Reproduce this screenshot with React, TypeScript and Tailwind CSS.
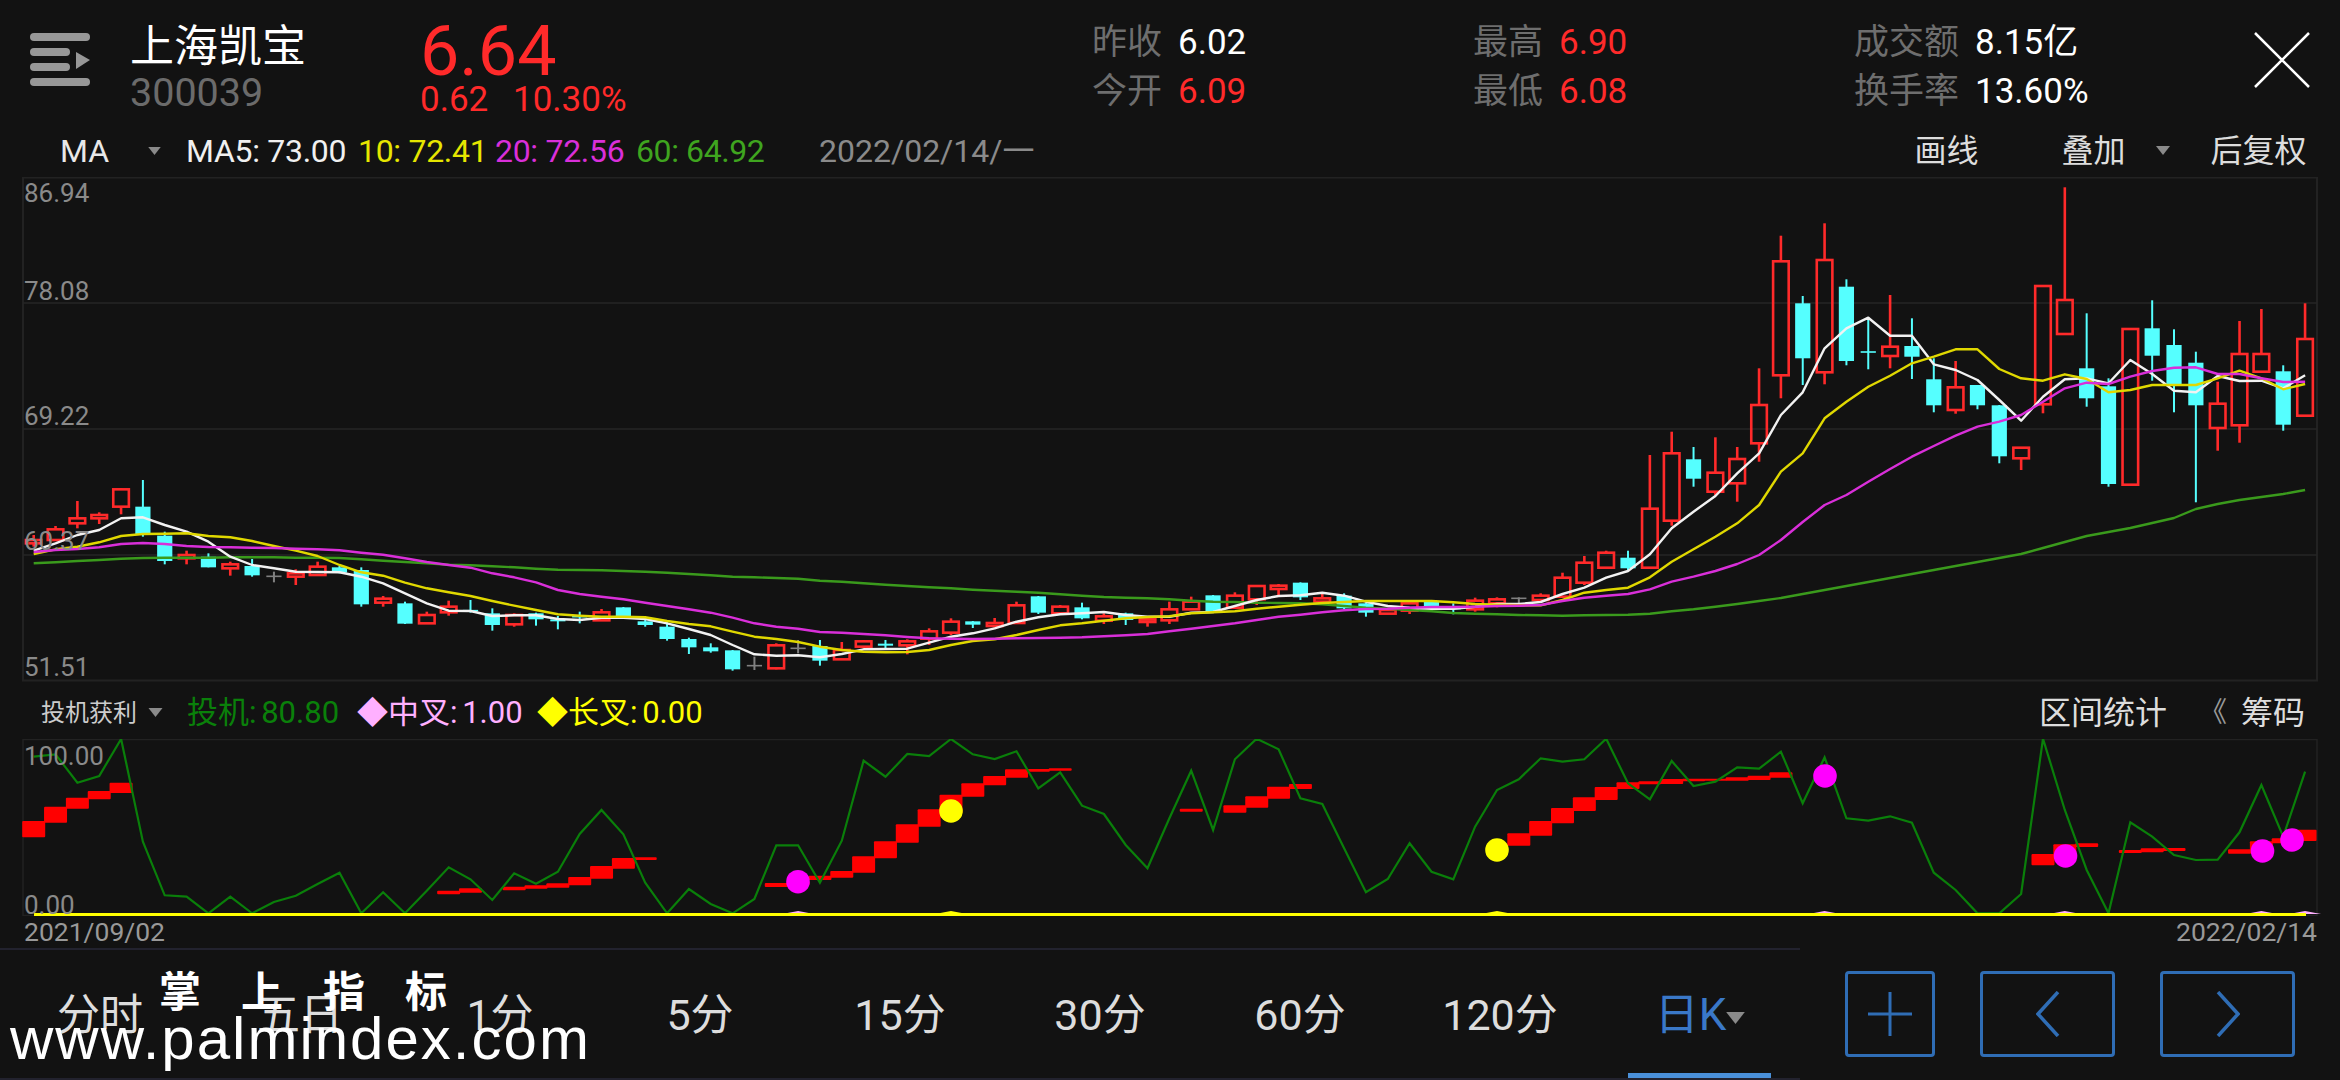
import React from 'react'

// x of the i-th trading day, in page pixels
const dayX = (i: number) => 33.7 + 21.84 * i

const y8 = (z: number) => 460 + z / 3
const y9 = (z: number) => 500 + z / 3
const same = (z: number) => z

type Raw = [number, number, number, number, string]

const raw8: Raw[] = [
  [225, 260, 240, 250, 'r'], [198, 240, 208, 240, 'r'], [123, 205, 175, 190, 'r'], [157, 192, 165, 175, 'r'],
  [85, 163, 88, 140, 'r'], [60, 230, 140, 225, 'c'], [215, 313, 227, 303, 'c'], [272, 313, 285, 295, 'r'],
  [280, 322, 290, 322, 'c'], [305, 347, 313, 325, 'r'], [297, 350, 318, 346, 'c'], [335, 367, 349, 349, 'g'],
  [328, 375, 340, 350, 'r'], [305, 345, 320, 345, 'r'], [318, 340, 322, 338, 'c'], [322, 440, 330, 433, 'c'],
  [408, 440, 416, 428, 'r'], [425, 492, 430, 491, 'c'], [455, 490, 465, 490, 'r'], [422, 467, 440, 457, 'r'],
  [420, 458, 452, 454, 'c'], [445, 512, 460, 495, 'c'], [460, 500, 465, 493, 'r'], [458, 497, 460, 478, 'c'],
  [468, 508, 478, 484, 'c'], [455, 490, 470, 472, 'c'], [447, 482, 457, 481, 'r'], [441, 472, 442, 470, 'c'],
  [475, 500, 484, 495, 'c'], [480, 542, 500, 537, 'c'], [533, 582, 537, 562, 'c'], [550, 578, 562, 574, 'c'],
  [570, 632, 571, 628, 'c'], [590, 630, 617, 617, 'g'], [550, 628, 556, 625, 'r'], [540, 580, 565, 565, 'g'],
]

const raw9: Raw[] = [
  [420, 497, 438, 482, 'c'], [426, 480, 450, 478, 'r'], [420, 445, 424, 440, 'r'], [420, 447, 431, 437, 'c'],
  [418, 463, 424, 436, 'r'], [385, 435, 394, 416, 'r'], [355, 405, 365, 398, 'r'], [363, 384, 364, 374, 'c'],
  [354, 383, 369, 378, 'r'], [305, 372, 316, 369, 'r'], [288, 342, 289, 338, 'c'], [315, 342, 320, 340, 'r'],
  [308, 358, 322, 355, 'c'], [340, 372, 349, 362, 'r'], [338, 375, 340, 360, 'c'], [350, 380, 358, 366, 'r'],
  [305, 372, 328, 361, 'r'], [290, 330, 305, 328, 'r'], [285, 334, 286, 333, 'c'], [277, 326, 287, 323, 'r'],
  [257, 315, 258, 298, 'r'], [252, 287, 257, 267, 'r'], [247, 300, 248, 292, 'c'], [280, 315, 295, 305, 'r'],
  [280, 327, 287, 325, 'c'], [308, 350, 310, 338, 'c'], [325, 342, 330, 341, 'r'], [305, 342, 310, 332, 'r'],
  [305, 332, 306, 325, 'c'], [310, 343, 320, 328, 'c'], [293, 335, 302, 328, 'r'], [292, 322, 298, 310, 'r'],
  [292, 320, 295, 295, 'g'], [280, 305, 287, 300, 'r'],
]

const rawAbs: Raw[] = [
  [572.7, 596.7, 577.7, 596.7, 'r'], [556, 585, 562.7, 582.7, 'r'], [550.7, 569, 552.7, 567.7, 'r'], [550.7, 570, 557.7, 568.3, 'c'],
  [455, 568, 508.7, 567.7, 'r'], [431.7, 525.7, 453.3, 520.7, 'r'], [447, 486.7, 459.3, 478.7, 'c'], [437.3, 495, 472.7, 491.7, 'r'],
  [447, 501.7, 459, 483.3, 'r'], [368.3, 461.7, 405, 443.3, 'r'], [235.7, 398.3, 261.3, 375.3, 'r'], [296, 385, 303.3, 358.3, 'c'],
  [223.3, 384.3, 260, 372.3, 'r'], [279.3, 365.3, 286.7, 361, 'c'], [317.7, 369.3, 352, 352, 'c'], [295, 368.3, 346.7, 356, 'r'],
  [318.3, 379, 346, 356.7, 'c'], [358.3, 412.3, 379.3, 405.3, 'c'], [361, 413.7, 387.3, 410, 'r'], [385, 409.3, 385, 405.3, 'c'],
  [405, 463.3, 405.3, 456.3, 'c'], [447, 470, 447.7, 458.3, 'r'], [286, 413.3, 286, 404.3, 'r'], [187.3, 334, 300, 334, 'r'],
  [313.3, 406.7, 368.3, 398.3, 'c'], [378.3, 486.7, 386.3, 484, 'c'], [329, 485, 329, 484.7, 'r'], [300.3, 380.7, 328.3, 355.7, 'c'],
  [329.3, 412.3, 345, 385, 'c'], [351.7, 502.3, 362.7, 405.3, 'c'], [381.7, 450.7, 403.7, 428, 'r'], [321, 442.7, 354, 425.3, 'r'],
  [309, 371.7, 354, 371.7, 'r'], [365.3, 430.7, 371.3, 424.7, 'c'], [303.3, 416, 339, 415.7, 'r'],
]

const toPx = (rows: Raw[], f: (z: number) => number) =>
  rows.map(([hi, lo, top, bot, kind]) => ({ hi: f(hi), lo: f(lo), top: f(top), bot: f(bot), kind }))

const candles = [...toPx(raw8, y8), ...toPx(raw9, y9), ...toPx(rawAbs, same)]

const ma5 = [
  ...[272, 250, 225, 210, 175, 172, 195, 215, 245, 290, 315, 325, 335, 336, 337, 350, 370, 400, 430, 452, 453, 468, 466, 466, 477, 480, 473, 473, 477, 490, 507, 525, 555, 583, 587, 586].map(y8),
  ...[472, 462, 448, 447, 446, 428, 410, 400, 385, 365, 352, 343, 340, 336, 345, 350, 350, 338, 336, 318, 300, 288, 286, 278, 287, 305, 318, 323, 326, 326, 320, 312, 312, 306].map(y9),
  594, 587.7, 577.7, 571, 554.3, 528.3, 511.7, 496, 473.3, 453.3, 415, 392.3, 348.3, 328.3, 317.7, 335.7, 335.7, 364.3, 370, 380, 400, 420.7, 396.7, 379.3, 378.3, 383.3, 360, 374, 390.7, 392.3, 376, 381, 380.7, 388.3, 375.3,
]
const ma10 = [
  ...[282, 268, 260, 247, 228, 222, 221, 220, 228, 232, 243, 258, 272, 288, 315, 337, 347, 368, 385, 397, 408, 423, 437, 450, 463, 467, 470, 470, 472, 483, 492, 499, 515, 530, 537, 546].map(y8),
  ...[440, 450, 455, 457, 456, 450, 435, 423, 418, 405, 390, 376, 370, 362, 355, 351, 349, 340, 337, 334, 326, 320, 314, 309, 306, 303, 303, 303, 303, 307, 312, 314, 316, 316].map(y9),
  600, 592.7, 590, 587.7, 577.3, 561.7, 549.3, 536.7, 523.3, 505, 471.7, 453.3, 418.3, 401.7, 386.7, 375.7, 363.3, 356.7, 349.3, 349.3, 369, 378.3, 380.7, 374.3, 379, 392.3, 390, 385, 385, 385, 378.3, 370.7, 378.3, 389.3, 384,
]
const ma20 = [
  ...[276, 270, 267, 262, 252, 249, 252, 258, 261, 262, 263, 264, 266, 268, 271, 278, 284, 295, 306, 315, 323, 340, 352, 367, 390, 402, 410, 418, 428, 438, 448, 458, 473, 490, 500, 506].map(y8),
  ...[396, 398, 402, 406, 411, 415, 416, 417, 416, 415, 414, 413, 412, 409, 406, 402, 394, 386, 378, 370, 360, 350, 344, 337, 331, 327, 326, 323, 321, 321, 320, 318, 317, 315].map(y9),
  601, 597.7, 595.7, 594, 589.3, 581.7, 576.7, 571, 564, 555, 540, 522, 505, 495, 481.7, 469, 456.7, 446, 435.7, 426.7, 421.7, 415, 401.7, 388.3, 382.7, 384, 376.7, 371, 367.7, 367.3, 374, 374, 378.3, 382, 381.7,
]
const ma60 = [
  ...[310, 307, 303, 300, 296, 294, 293, 293, 293, 292, 292, 292, 293, 293, 294, 298, 302, 306, 310, 314, 316, 319, 322, 326, 329, 330, 331, 333, 335, 338, 342, 346, 350, 352, 354, 356].map(y8),
  ...[242, 245, 250, 254, 258, 262, 265, 269, 272, 275, 278, 283, 287, 291, 293, 295, 298, 302, 305, 306, 308, 309, 310, 313, 318, 323, 326, 330, 334, 339, 341, 343, 345, 346].map(y9),
  615.7, 615.3, 615, 614.7, 613.7, 611.3, 609.3, 606.7, 604, 601, 598, 594, 590, 586, 582, 578, 574, 570, 566, 562, 558, 554, 548, 542, 536, 532, 528, 523, 518, 509, 504, 500, 497, 494, 490,
]

const y700 = (z: number) => 700 + z / 3
const y680 = (z: number) => 680 + z / 3

const speculate = [
  ...[170, 163, 248, 228, 117, 425, 586, 590, 640, 590, 640, 606, 587, 552, 518, 640, 577, 640, 572, 502, 538, 600, 520, 551, 515, 402].map(y700),
  ...[330, 403, 548, 640, 567, 612, 640, 597, 436, 436, 548, 422, 182, 230, 162, 168, 117, 163, 177, 154, 265, 217, 317, 342, 435, 505, 355, 212].map(y700),
  ...[450, 238, 176, 208, 355, 372, 505, 637, 597, 490, 575, 598, 440, 330, 298, 235, 245, 238, 176, 310, 358, 243, 318, 305, 262, 266, 215, 370, 232, 415, 422, 409, 428, 578, 630, 700, 700, 642, 176, 390, 570, 700, 427, 470, 525, 540, 539, 457, 315, 470, 275].map(y680),
]

// red step band: [day, top, bottom]
const bands: [number, number, number][] = [
  ...([
    [0, 363, 412], [1, 320, 368], [2, 293, 326], [3, 273, 298], [4, 248, 279],
    [19, 572, 583], [20, 565, 578], [22, 560, 571], [23, 556, 566], [24, 550, 563], [25, 531, 556], [26, 498, 536],
    [27, 474, 506], [28, 472, 480], [34, 549, 561], [35, 545, 555], [36, 527, 540], [37, 513, 533], [38, 469, 518],
    [39, 424, 475], [40, 373, 428], [41, 328, 380], [42, 284, 340], [43, 250, 290], [44, 228, 256], [45, 208, 233],
    [46, 207, 215], [47, 205, 212],
  ] as [number, number, number][]).map(([d, t, b]): [number, number, number] => [d, y700(t), y700(b)]),
  ...([
    [53, 386, 395], [55, 376, 398], [56, 349, 383], [57, 320, 356], [58, 312, 327],
    [68, 460, 497], [69, 423, 467], [70, 384, 430], [71, 352, 393], [72, 321, 360], [73, 307, 327], [74, 304, 313],
    [75, 297, 312], [76, 296, 304], [77, 296, 302], [78, 292, 302], [79, 287, 300], [80, 277, 293],
    [92, 522, 556], [93, 493, 535], [94, 490, 501], [96, 510, 519], [97, 505, 517], [98, 504, 513],
    [101, 508, 521], [102, 484, 520], [103, 475, 490], [104, 449, 483],
  ] as [number, number, number][]).map(([d, t, b]): [number, number, number] => [d, y680(t), y680(b)]),
]

const dots = [
  { x: 798, y: 881.7, c: '#ff00ff' },
  { x: 951, y: 811, c: '#ffff00' },
  { x: 1497, y: 850, c: '#ffff00' },
  { x: 1825, y: 776, c: '#ff00ff' },
  { x: 2065.5, y: 856, c: '#ff00ff' },
  { x: 2262.5, y: 851, c: '#ff00ff' },
  { x: 2292, y: 840, c: '#ff00ff' },
]

const line = (ys: number[]) => ys.map((y, i) => `${dayX(i).toFixed(1)},${y.toFixed(1)}`).join(' ')

function KChart() {
  return (
    <svg viewBox="0 177 2340 505" className="block w-[2340px] h-[505px]">
      <rect x="23" y="177.5" width="2294" height="503" fill="none" stroke="#222222" strokeWidth="2" />
      {[303, 429, 555].map(y => (
        <line key={y} x1="23" x2="2317" y1={y} y2={y} stroke="#262626" strokeWidth="1.5" />
      ))}
      {candles.map((c, i) => {
        const x = dayX(i)
        if (c.kind === 'r') {
          return (
            <g key={i} stroke="#ff2a2a" strokeWidth="2.6" fill="none">
              <line x1={x} x2={x} y1={c.hi} y2={c.top} />
              <line x1={x} x2={x} y1={c.bot} y2={c.lo} />
              <rect x={x - 7.8} y={c.top} width="15.6" height={Math.max(c.bot - c.top, 1)} />
            </g>
          )
        }
        const color = c.kind === 'c' ? '#55ffff' : '#808080'
        return (
          <g key={i}>
            <line x1={x} x2={x} y1={c.hi} y2={c.lo} stroke={color} strokeWidth="2" />
            <rect x={x - 7.6} y={c.top - (c.bot - c.top < 1 ? 0.8 : 0)} width="15.2" height={Math.max(c.bot - c.top, 1.6)} fill={color} />
          </g>
        )
      })}
      <g fill="none" strokeWidth="2.4" strokeLinejoin="round">
        <polyline points={line(ma60)} stroke="#3a9a1c" />
        <polyline points={line(ma5)} stroke="#f2f2f2" />
        <polyline points={line(ma10)} stroke="#e0d800" />
        <polyline points={line(ma20)} stroke="#d92fd9" />
      </g>
    </svg>
  )
}

function Oscillator() {
  return (
    <svg viewBox="0 739 2340 177" className="block w-[2340px] h-[177px]">
      <rect x="23" y="739.5" width="2294" height="176" fill="none" stroke="#222222" strokeWidth="1.5" />
      {bands.map(([d, t, b]) => (
        <rect key={d} x={Math.max(dayX(d) - 11.5, 22)} y={t} width={dayX(d) + 11.5 > 2318 ? 2318 - dayX(d) + 11.5 : 23} height={b - t} rx="1" fill="#ff0000" />
      ))}
      <polyline points={line(speculate)} fill="none" stroke="#0a7f0a" strokeWidth="2.2" />
      {[35, 42, 67, 82, 93, 102, 104].map(d => (
        <polygon key={d} points={`${dayX(d) - 16},914 ${dayX(d)},911 ${dayX(d) + 16},914`} fill={d === 42 || d === 67 ? '#ffff00' : '#ffb0ff'} />
      ))}
      <line x1="34" x2="2306" y1="914.5" y2="914.5" stroke="#ffff00" strokeWidth="3" />
      {dots.map(d => (
        <ellipse key={d.x} cx={d.x} cy={d.y} rx="11.8" ry="11.8" fill={d.c} />
      ))}
    </svg>
  )
}

function MenuIcon() {
  return (
    <svg width="60" height="53" viewBox="0 0 60 53" className="shrink-0">
      <g fill="#979797">
        <rect x="0" y="0" width="60" height="8" rx="4" />
        <rect x="0" y="15" width="40" height="8" rx="4" />
        <rect x="0" y="30" width="40" height="8" rx="4" />
        <rect x="0" y="45" width="60" height="8" rx="4" />
        <polygon points="46,19 60,27 46,36" />
      </g>
    </svg>
  )
}

function Caret({ className }: { className: string }) {
  return (
    <svg viewBox="0 0 14 9" className={className}>
      <polygon points="0,0 14,0 7,9" fill="#8a8a8a" />
    </svg>
  )
}

function Stat({ rows, labelWidth }: { rows: [string, string, string][]; labelWidth: string }) {
  return (
    <div className="w-[381px] shrink-0 flex flex-col text-[35px] leading-[49px]">
      {rows.map(([label, value, color]) => (
        <div key={label} className="flex">
          <span className={`${labelWidth} text-[#6e6e6e]`}>{label}</span>
          <span className={color}>{value}</span>
        </div>
      ))}
    </div>
  )
}

const tabs = ['分时', '五日', '1分', '5分', '15分', '30分', '60分', '120分']

export default function App() {
  return (
    <div className="relative w-[2340px] h-[1080px] overflow-hidden bg-[#121212] text-white [font-family:Roboto,'Noto_Sans_CJK_SC',sans-serif]">
      {/* quote header */}
      <div className="flex h-[122px] pl-[30px]">
        <div className="pt-[33px]"><MenuIcon /></div>
        <div className="w-[290px] ml-[40px] shrink-0 pt-[25px] flex flex-col">
          <span className="text-[44px] leading-[44px]">上海凯宝</span>
          <span className="text-[39.5px] leading-[46px] mt-[1px] text-[#6b6b6b]">300039</span>
        </div>
        <div className="w-[672px] shrink-0 flex flex-col pt-[16px]">
          <span className="text-[70px] leading-[70px] text-[#ff2a2a]">6.64</span>
          <div className="flex text-[35px] leading-[28px] text-[#ff2a2a]">
            <span className="w-[93px]">0.62</span>
            <span>10.30%</span>
          </div>
        </div>
        <div className="flex pt-[18px]">
          <Stat labelWidth="w-[86px]" rows={[['昨收', '6.02', 'text-white'], ['今开', '6.09', 'text-[#ff2a2a]']]} />
          <Stat labelWidth="w-[86px]" rows={[['最高', '6.90', 'text-[#ff2a2a]'], ['最低', '6.08', 'text-[#ff2a2a]']]} />
          <div className="w-[400px] shrink-0">
            <Stat labelWidth="w-[121px]" rows={[['成交额', '8.15亿', 'text-white'], ['换手率', '13.60%', 'text-white']]} />
          </div>
        </div>
        <svg width="56" height="56" viewBox="0 0 56 56" className="mt-[32px] shrink-0">
          <path d="M1 1 L55 55 M55 1 L1 55" stroke="#ffffff" strokeWidth="2.5" fill="none" />
        </svg>
      </div>

      {/* MA row */}
      <div className="flex items-center h-[55px] pt-[2px] pl-[60px] text-[32px] leading-none">
        <span className="w-[88px] text-[#e8e8e8]">MA</span>
        <Caret className="w-[13px] h-[8px] mr-[25px]" />
        <span className="w-[172px] text-[#f0f0f0] tracking-[-0.3px]">MA5: 73.00</span>
        <span className="w-[137px] text-[#e6e600] tracking-[-0.3px]">10: 72.41</span>
        <span className="w-[141px] text-[#d92fd9] tracking-[-0.3px]">20: 72.56</span>
        <span className="w-[183px] text-[#3fa51f] tracking-[-0.4px]">60: 64.92</span>
        <span className="text-[#8a8a8a]">2022/02/14/一</span>
        <span className="ml-[880px] w-[147px] text-[#dddddd]">画线</span>
        <span className="w-[94px] text-[#dddddd]">叠加</span>
        <Caret className="w-[14px] h-[9px] mr-[41px]" />
        <span className="text-[#dddddd]">后复权</span>
      </div>

      {/* candlestick panel */}
      <div className="relative h-[505px]">
        <KChart />
        <div className="absolute left-[24px] top-0 h-full text-[26px] leading-[30px] text-[#8a8a8a]">
          <span className="absolute top-[1px]">86.94</span>
          <span className="absolute top-[99px]">78.08</span>
          <span className="absolute top-[224px]">69.22</span>
          <span className="absolute top-[349px]">60.37</span>
          <span className="absolute top-[475px]">51.51</span>
        </div>
      </div>

      {/* indicator row */}
      <div className="flex items-center h-[57px] pt-[4px] pl-[41px]">
        <span className="text-[24px] text-[#cccccc] w-[107px]">投机获利</span>
        <Caret className="w-[15px] h-[9px] mr-[24px]" />
        <div className="flex items-center text-[31px] leading-none [word-spacing:-3px]">
          <span className="w-[170px] text-[#0a800a]">投机: 80.80</span>
          <span className="w-[180px] text-[#ffb0ff]">◆中叉: 1.00</span>
          <span className="w-[170px] text-[#ffff00]">◆长叉: 0.00</span>
        </div>
        <span className="ml-[1332px] w-[160px] text-[32px] leading-none text-[#dddddd]">区间统计</span>
        <span className="w-[42px] text-[28px] leading-none text-[#999999]">《</span>
        <span className="text-[32px] leading-none text-[#dddddd]">筹码</span>
      </div>

      {/* oscillator */}
      <div className="relative h-[177px]">
        <Oscillator />
        <span className="absolute left-[24px] top-[2px] text-[26px] leading-[30px] text-[#8a8a8a]">100.00</span>
        <span className="absolute left-[24px] top-[151px] text-[26px] leading-[30px] text-[#8a8a8a]">0.00</span>
      </div>

      {/* dates */}
      <div className="flex items-center justify-between h-[32px] pl-[24px] pr-[23px] text-[26.5px] leading-none text-[#999999]">
        <span>2021/09/02</span>
        <span>2022/02/14</span>
      </div>

      {/* period tabs and buttons */}
      <div className="flex h-[132px]">
        <div className="w-[1800px] shrink-0 grid grid-cols-9 items-center pt-[2px] border-t-2 border-b-2 border-[#22222e] text-[43px] leading-none text-[#dddddd]">
          {tabs.map(t => (
            <span key={t} className="text-center">{t}</span>
          ))}
          <div className="relative h-full flex items-center justify-center text-[44px] text-[#3a78c8]">
            <span>日K</span>
            <Caret className="w-[19px] h-[12px] mt-[6px]" />
            <div className="absolute bottom-0 left-[28px] right-[29px] h-[5px] bg-[#4a90d9]" />
          </div>
        </div>
        <div className="flex items-center pl-[45px] gap-[45px]">
          <button className="w-[90px] h-[86px] border-[3px] border-[#2f6db5] rounded-[4px] flex items-center justify-center">
            <svg width="44" height="44" viewBox="0 0 44 44"><path d="M0 22 H44 M22 0 V44" stroke="#2f6db5" strokeWidth="3" fill="none" /></svg>
          </button>
          <button className="w-[135px] h-[86px] border-[3px] border-[#2f6db5] rounded-[4px] flex items-center justify-center">
            <svg width="24" height="46" viewBox="0 0 24 46"><path d="M22 1 L2 23 L22 45" stroke="#2f6db5" strokeWidth="3.5" fill="none" /></svg>
          </button>
          <button className="w-[135px] h-[86px] border-[3px] border-[#2f6db5] rounded-[4px] flex items-center justify-center">
            <svg width="24" height="46" viewBox="0 0 24 46"><path d="M2 1 L22 23 L2 45" stroke="#2f6db5" strokeWidth="3.5" fill="none" /></svg>
          </button>
        </div>
      </div>

      {/* watermark lying over the tabs */}
      <div className="absolute left-[159px] top-[970px] text-[42px] leading-[46px] font-bold tracking-[40px] whitespace-nowrap">掌上指标</div>
      <div className="absolute left-[10px] top-[1006px] text-[60px] leading-[66px] tracking-[2px] whitespace-nowrap [font-family:'Liberation_Sans',sans-serif]">www.palmindex.com</div>
    </div>
  )
}
